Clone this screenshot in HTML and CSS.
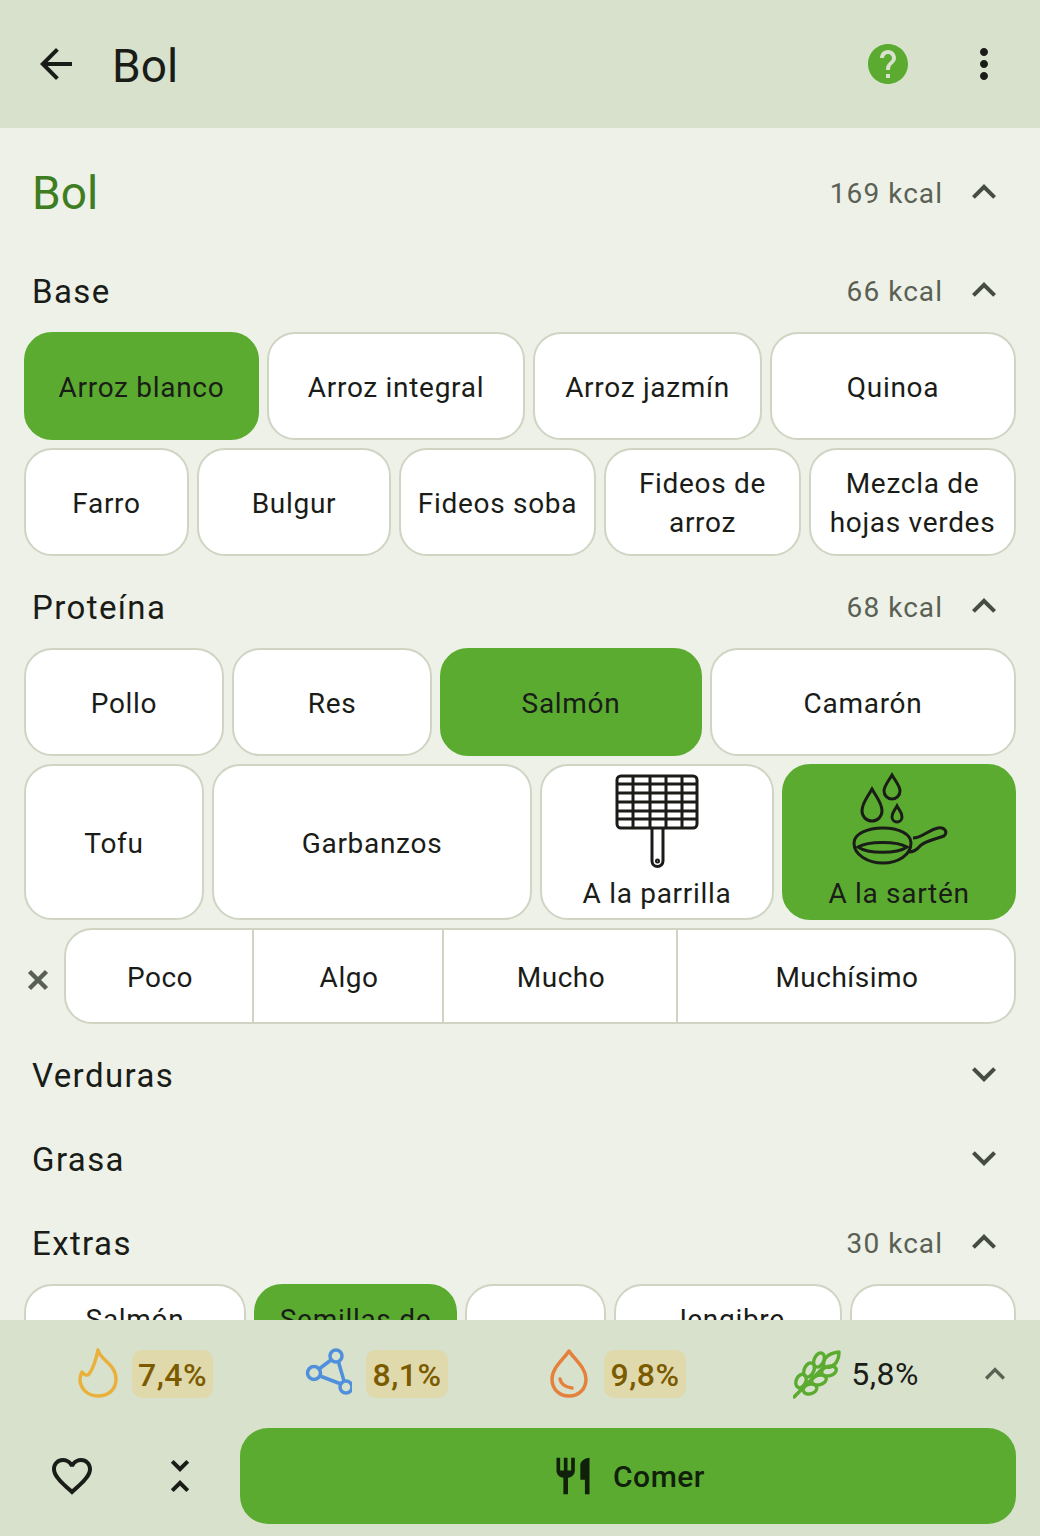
FILE: index.html
```html
<!DOCTYPE html>
<html lang="es">
<head>
    <meta charset="UTF-8">
    <meta name="viewport" content="width=device-width, initial-scale=1.0">
    <title>Bol</title>
    <link rel="stylesheet" href="styles.css">
</head>
<body>
    <header class="top-bar">
        <svg class="icon back-icon" viewBox="0 0 24 24"><path d="M20 11H7.83l5.59-5.59L12 4l-8 8 8 8 1.41-1.41L7.83 13H20v-2z"/></svg>
        <h1>Bol</h1>
        <svg class="icon help-icon" viewBox="0 0 24 24"><path fill-rule="evenodd" d="M12 2C6.48 2 2 6.48 2 12s4.48 10 10 10 10-4.48 10-10S17.52 2 12 2zm1 17h-2v-2h2v2zm2.07-7.75l-.9.92C13.45 12.9 13 13.5 13 15h-2v-.5c0-1.1.45-2.1 1.17-2.83l1.24-1.26c.37-.36.59-.86.59-1.41 0-1.1-.9-2-2-2s-2 .9-2 2H8c0-2.21 1.79-4 4-4s4 1.79 4 4c0 .88-.36 1.68-.93 2.25z"/></svg>
        <svg class="icon more-icon" viewBox="0 0 24 24"><path d="M12 8c1.1 0 2-.9 2-2s-.9-2-2-2-2 .9-2 2 .9 2 2 2zm0 2c-1.1 0-2 .9-2 2s.9 2 2 2 2-.9 2-2-.9-2-2-2zm0 6c-1.1 0-2 .9-2 2s.9 2 2 2 2-.9 2-2-.9-2-2-2z"/></svg>
    </header>

    <main class="content">
        <div class="recipe-head">
            <h2>Bol</h2>
            <span class="kcal">169 kcal</span>
            <svg class="icon chevron" viewBox="0 0 24 24"><path d="M12 8l-6 6 1.41 1.41L12 10.83l4.59 4.58L18 14z"/></svg>
        </div>

        <div class="section-head">
            <h3>Base</h3>
            <span class="kcal">66 kcal</span>
            <svg class="icon chevron" viewBox="0 0 24 24"><path d="M12 8l-6 6 1.41 1.41L12 10.83l4.59 4.58L18 14z"/></svg>
        </div>
        <div class="chip-row base-a">
            <button class="chip active">Arroz blanco</button>
            <button class="chip">Arroz integral</button>
            <button class="chip">Arroz jazmín</button>
            <button class="chip">Quinoa</button>
        </div>
        <div class="chip-row base-b">
            <button class="chip">Farro</button>
            <button class="chip">Bulgur</button>
            <button class="chip">Fideos soba</button>
            <button class="chip">Fideos de arroz</button>
            <button class="chip">Mezcla de hojas verdes</button>
        </div>

        <div class="section-head">
            <h3>Proteína</h3>
            <span class="kcal">68 kcal</span>
            <svg class="icon chevron" viewBox="0 0 24 24"><path d="M12 8l-6 6 1.41 1.41L12 10.83l4.59 4.58L18 14z"/></svg>
        </div>
        <div class="chip-row protein-a">
            <button class="chip">Pollo</button>
            <button class="chip">Res</button>
            <button class="chip active">Salmón</button>
            <button class="chip">Camarón</button>
        </div>
        <div class="chip-row protein-b">
            <button class="chip">Tofu</button>
            <button class="chip">Garbanzos</button>
            <button class="chip icon-chip">
                <svg class="cook-icon" viewBox="0 0 92 96" fill="none" stroke="currentColor" stroke-width="3">
                    <rect x="6" y="4" width="80" height="52" rx="4"/>
                    <path d="M22 4v52M39 4v52M55 4v52M71 4v52M6 12h80M6 21h80M6 30h80M6 39h80M6 47h80"/>
                    <path d="M41 56v33a5.500 5.500 0 0 0 11 0V56"/>
                    <circle cx="46.500" cy="89" r="1"/>
                </svg>
                <span>A la parrilla</span>
            </button>
            <button class="chip icon-chip active">
                <svg class="cook-icon" viewBox="5 0 100 96" fill="none" stroke="currentColor" stroke-width="3">
                    <path d="M28 17c-5 9-10 14-10 22a10 10 0 0 0 20 0c0-8-5-13-10-22z"/>
                    <path d="M48 3c-4 7-8 11-8 16a8 8 0 0 0 16 0c0-5-4-9-8-16z"/>
                    <path d="M53 34c-2 4-5 6-5 11a5 5 0 0 0 10 0c0-5-3-7-5-11z"/>
                    <path d="M10 71c0-9 13-15 29-15s28 6 28 15c0 12-13 20-28 20s-29-8-29-20z"/>
                    <path d="M14 75C24 69 53 69 63 75 53 82 24 82 14 75z"/>
                    <path d="M69 66C78 66 84 58 94 56 101 55 104 60 100 64 92 67 80 69 76 74 72 79 69 80 65 80"/>
                </svg>
                <span>A la sartén</span>
            </button>
        </div>
        <div class="amount-row">
            <svg class="clear-icon" viewBox="0 0 24 24"><path d="M3.500 3.500L20.500 20.500M20.500 3.500L3.500 20.500"/></svg>
            <div class="segments">
                <button class="segment">Poco</button>
                <button class="segment">Algo</button>
                <button class="segment">Mucho</button>
                <button class="segment">Muchísimo</button>
            </div>
        </div>

        <div class="section-head">
            <h3>Verduras</h3>
            <svg class="icon chevron" viewBox="0 0 24 24"><path d="M16.590 8.590L12 13.170 7.410 8.590 6 10l6 6 6-6z"/></svg>
        </div>
        <div class="section-head">
            <h3>Grasa</h3>
            <svg class="icon chevron" viewBox="0 0 24 24"><path d="M16.590 8.590L12 13.170 7.410 8.590 6 10l6 6 6-6z"/></svg>
        </div>
        <div class="section-head">
            <h3>Extras</h3>
            <span class="kcal">30 kcal</span>
            <svg class="icon chevron" viewBox="0 0 24 24"><path d="M12 8l-6 6 1.41 1.41L12 10.83l4.59 4.58L18 14z"/></svg>
        </div>
        <div class="chip-row extras-a">
            <button class="chip">Salmón</button>
            <button class="chip active">Semillas de</button>
            <button class="chip"></button>
            <button class="chip">Jengibre</button>
            <button class="chip"></button>
        </div>
    </main>

    <footer class="bottom-bar">
        <div class="stats">
            <div class="stat">
                <svg class="stat-icon flame" viewBox="0 0 48 56" fill="none" stroke-width="3.500" stroke-linejoin="round"><path d="M22 4c2 10 18 14 18 29 0 11-8 17-18 17-11 0-18-8-18-17 0-3 1-5 2-7 2 3 5 4 7 2 3-4 7-14 9-24z"/></svg>
                <span class="pill">7,4%</span>
            </div>
            <div class="stat">
                <svg class="stat-icon nodes" viewBox="0 0 48 56" fill="none" stroke-width="3.500"><circle cx="32" cy="10" r="6"/><circle cx="10" cy="27" r="6.500"/><circle cx="42" cy="41" r="6"/><path d="M27 14L15 23M34.500 16L40 35M16 30l21 8"/></svg>
                <span class="pill">8,1%</span>
            </div>
            <div class="stat">
                <svg class="stat-icon drop" viewBox="0 0 40 56" fill="none" stroke-width="3.500" stroke-linejoin="round" stroke-linecap="round"><path d="M20 5C14 14 3 22 3 33c0 10 7 17 17 17s17-7 17-17C37 22 26 14 20 5z"/><path d="M11 33c1 5 5 8 12 9"/></svg>
                <span class="pill">9,8%</span>
            </div>
            <div class="stat">
                <svg class="stat-icon wheat" viewBox="0 0 50 52" fill="none" stroke-width="3.400" stroke-linejoin="round" stroke-linecap="round">
                    <path d="M1 49L31 19"/>
                    <path d="M31 19c-2-8 4-14 15-15 0 10-6 17-15 15z"/>
                    <ellipse cx="26" cy="12" rx="7.500" ry="4.800" transform="rotate(-65 26 12)"/>
                    <ellipse cx="36" cy="23" rx="7.500" ry="4.800" transform="rotate(-15 36 23)"/>
                    <ellipse cx="16" cy="22" rx="7.500" ry="4.800" transform="rotate(-65 16 22)"/>
                    <ellipse cx="26" cy="32" rx="7.500" ry="4.800" transform="rotate(-15 26 32)"/>
                    <ellipse cx="8" cy="33" rx="7" ry="4.800" transform="rotate(-65 8 33)"/>
                    <ellipse cx="17" cy="41" rx="7" ry="4.800" transform="rotate(-15 17 41)"/>
                </svg>
                <span class="plain-stat">5,8%</span>
            </div>
            <svg class="icon stats-chevron" viewBox="0 0 24 24"><path d="M12 8l-6 6 1.41 1.41L12 10.83l4.59 4.58L18 14z"/></svg>
        </div>
        <div class="actions">
            <svg class="icon heart-icon" viewBox="0 0 24 24"><path d="M16.500 3c-1.740 0-3.410.81-4.500 2.090C10.910 3.810 9.240 3 7.500 3 4.420 3 2 5.420 2 8.500c0 3.780 3.400 6.860 8.550 11.540L12 21.350l1.450-1.320C18.600 15.360 22 12.280 22 8.500 22 5.420 19.580 3 16.500 3zm-4.400 15.550l-.1.1-.1-.1C7.140 14.240 4 11.390 4 8.500 4 6.500 5.500 5 7.500 5c1.540 0 3.040.99 3.570 2.360h1.870C13.460 5.990 14.960 5 16.500 5c2 0 3.500 1.500 3.500 3.500 0 2.890-3.140 5.740-7.900 10.050z"/></svg>
            <svg class="icon collapse-icon" viewBox="0 0 24 24"><path d="M7.410 18.590L8.820 20 12 16.830 15.180 20l1.410-1.410L12 14l-4.590 4.590zm9.180-13.180L15.180 4 12 7.170 8.820 4 7.410 5.410 12 10l4.590-4.590z"/></svg>
            <button class="eat-button">
                <svg class="icon eat-icon" viewBox="0 0 24 24"><path d="M11 9H9V2H7v7H5V2H3v7c0 2.120 1.660 3.840 3.750 3.970V22h2.500v-9.030C11.340 12.840 13 11.120 13 9V2h-2v7zm5-3v8h2.500v8H21V2c-2.760 0-5 2.240-5 4z"/></svg>
                Comer
            </button>
        </div>
    </footer>
</body>
</html>
```

FILE: styles.css
```css
* {
    box-sizing: border-box;
}
body {
    margin: 0;
    height: 1536px;
    overflow: hidden;
    display: flex;
    flex-direction: column;
    font-family: Roboto, "Liberation Sans", sans-serif;
    color: #1a1c18;
    background-color: #edf1e7;
}
h1, h2, h3 {
    margin: 0;
    font-weight: 400;
}
button {
    font: inherit;
    color: inherit;
}
.icon {
    display: block;
    flex-shrink: 0;
    width: 48px;
    height: 48px;
    fill: currentColor;
}

/* top bar */
.top-bar {
    height: 128px;
    flex-shrink: 0;
    display: flex;
    align-items: center;
    padding: 0 32px;
    background-color: #d8e1cb;
}
.top-bar h1 {
    flex: 1;
    margin-left: 32px;
    padding-top: 4px;
    font-size: 46px;
}
.help-icon {
    margin-right: 48px;
    fill: #5bab31;
}

/* content */
.content {
    flex: 1;
    min-height: 0;
    overflow: hidden;
    padding: 0 24px;
}
.recipe-head {
    height: 120px;
    padding: 10px 8px 0;
    display: flex;
    align-items: center;
}
.recipe-head h2 {
    flex: 1;
    font-size: 46px;
    color: #3f7d22;
}
.recipe-head .chevron {
    margin-top: -2px;
}
.recipe-head .kcal {
    padding-top: 0;
}
.section-head {
    height: 84px;
    padding: 0 8px;
    display: flex;
    align-items: center;
}
.section-head h3 {
    flex: 1;
    padding-top: 2px;
    font-size: 33px;
    letter-spacing: 1.4px;
}
.kcal {
    margin-right: 17px;
    padding-top: 2px;
    font-size: 28px;
    letter-spacing: 1.05px;
    color: #5a6054;
}
.chevron {
    color: #464c41;
}

/* chips */
.chip-row {
    display: grid;
    gap: 8px;
    margin-bottom: 8px;
}
.base-a { grid-template-columns: 235px 258px 229px 246px; }
.base-b { grid-template-columns: 165px 194px 197px 197px 207px; }
.protein-a { grid-template-columns: 200px 200px 262px 306px; }
.protein-b { grid-template-columns: 180px 320px 234px 234px; }
.extras-a { grid-template-columns: 222px 203px 141px 228px 166px; }

.chip {
    height: 108px;
    padding: 2px 8px 0;
    border: 2px solid #d0d4c3;
    border-radius: 28px;
    background-color: #fff;
    font-size: 28px;
    line-height: 39px;
    letter-spacing: 0.7px;
    text-align: center;
}
.chip.active {
    background-color: #5bab31;
    border-color: #5bab31;
}
.protein-b .chip {
    height: 156px;
}
/* text sits on the first line, the bottom bar covers the rest */
.extras-a .chip {
    padding-bottom: 39px;
}
.icon-chip {
    display: flex;
    flex-direction: column;
    align-items: center;
    padding: 6px 0 0;
}
.cook-icon {
    display: block;
    width: 92px;
    height: 96px;
    flex-shrink: 0;
}
.active .cook-icon {
    width: 100px;
}
.icon-chip span {
    margin-top: 6px;
}

/* amount selector */
.amount-row {
    display: flex;
    align-items: center;
    margin-bottom: 8px;
}
.clear-icon {
    display: block;
    flex-shrink: 0;
    width: 24px;
    height: 24px;
    margin: 8px 14px 0 2px;
    fill: none;
    stroke: #5a6054;
    stroke-width: 4.500;
}
.segments {
    flex: 1;
    height: 96px;
    display: grid;
    grid-template-columns: 190px 190px 234px 338px;
}
.segment {
    padding: 2px 0 0 2px;
    border: 2px solid #d0d4c3;
    border-left: 0;
    background-color: #fff;
    font-size: 28px;
    letter-spacing: 0.5px;
}
.segment:first-child {
    border-left: 2px solid #d0d4c3;
    border-radius: 28px 0 0 28px;
}
.segment:last-child {
    border-radius: 0 28px 28px 0;
}

/* bottom bar */
.bottom-bar {
    height: 216px;
    flex-shrink: 0;
    background-color: #d8e1cb;
}
.stats {
    height: 108px;
    padding: 0 5px 0 26px;
    display: grid;
    grid-template-columns: 237px 226px 257px 220px 1fr;
    align-items: center;
}
.stat {
    display: flex;
    align-items: center;
    justify-content: center;
}
.stat-icon {
    display: block;
    height: 56px;
    width: 48px;
    margin-right: 8px;
}
.flame { stroke: #e9b13c; }
.nodes { stroke: #4f8fdc; margin-right: 14px; }
.drop { stroke: #e5813c; width: 40px; margin-right: 15px; }
.wheat { stroke: #5bab31; width: 50px; height: 52px; margin-right: 8px; }
.pill {
    height: 48px;
    padding: 1px 6px 0;
    display: flex;
    align-items: center;
    border-radius: 10px;
    background-color: #dfd9ac;
    font-size: 32px;
    font-weight: 500;
    letter-spacing: 0.5px;
    color: #7c5b00;
}
.plain-stat {
    font-size: 32px;
    letter-spacing: 0.5px;
}
.stats-chevron {
    width: 40px;
    height: 40px;
    margin-left: 9px;
    color: #5a6054;
}
.actions {
    display: flex;
    align-items: center;
    padding: 0 24px 0 48px;
}
.heart-icon {
    margin-right: 60px;
}
.collapse-icon {
    margin-right: 36px;
}
.eat-button {
    flex: 1;
    height: 96px;
    display: flex;
    align-items: center;
    justify-content: center;
    gap: 18px;
    border: none;
    border-radius: 28px;
    background-color: #5bab31;
    font-size: 30px;
    font-weight: 500;
    letter-spacing: 0.5px;
    color: #10200a;
}
.eat-icon {
    width: 44px;
    height: 44px;
}
```
